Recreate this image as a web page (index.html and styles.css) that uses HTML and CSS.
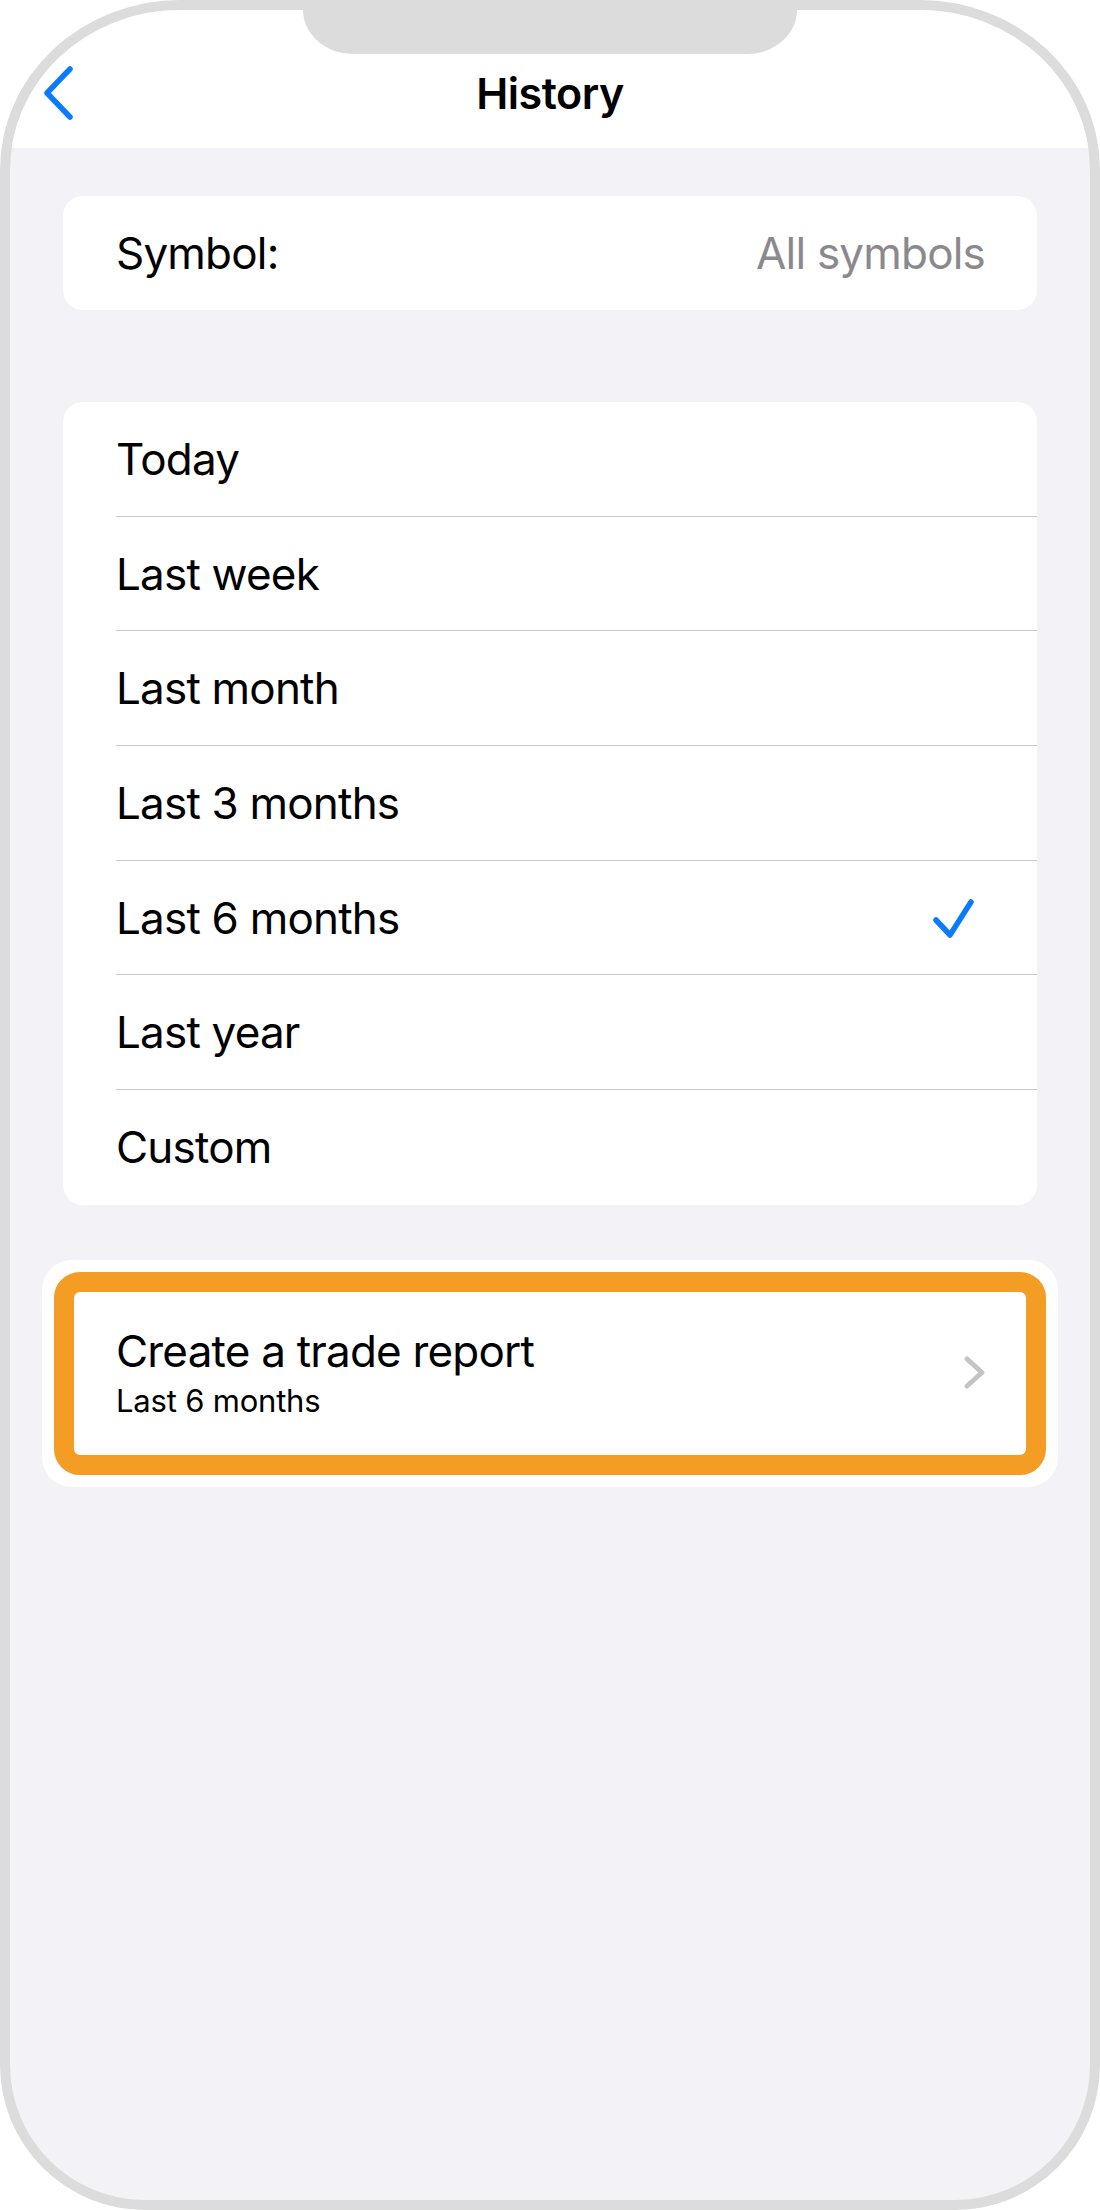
FILE: index.html
```html
<!DOCTYPE html>
<html lang="en">
<head>
<meta charset="utf-8">
<title>History</title>
<link rel="stylesheet" href="styles.css">
</head>
<body>
<div class="phone">
  <div class="notch"></div>
  <header class="navbar">
    <div class="nav-left">
      <svg class="back" width="32" height="54" viewBox="0 0 32 54"><path d="M27 3 L4 27 L27 51" fill="none" stroke="#0a7aff" stroke-width="5.5" stroke-linecap="round" stroke-linejoin="round"/></svg>
    </div>
    <div class="nav-title">History</div>
    <div class="nav-right"></div>
  </header>
  <main class="content">
    <div class="card symbol-card">
      <span class="label">Symbol:</span>
      <span class="value">All symbols</span>
    </div>
    <div class="card list-card">
      <div class="row"><div class="row-inner"><span>Today</span></div></div>
      <div class="row"><div class="row-inner"><span>Last week</span></div></div>
      <div class="row"><div class="row-inner"><span>Last month</span></div></div>
      <div class="row"><div class="row-inner"><span>Last 3 months</span></div></div>
      <div class="row"><div class="row-inner"><span>Last 6 months</span>
        <svg class="check" width="44" height="44" viewBox="0 0 44 44"><path d="M4 24 L18 39 L39 6" fill="none" stroke="#0a7aff" stroke-width="5.5" stroke-linecap="round" stroke-linejoin="round"/></svg>
      </div></div>
      <div class="row"><div class="row-inner"><span>Last year</span></div></div>
      <div class="row"><div class="row-inner"><span>Custom</span></div></div>
    </div>
    <div class="highlight">
      <div class="report">
        <div class="report-text">
          <div class="report-title">Create a trade report</div>
          <div class="report-sub">Last 6 months</div>
        </div>
        <svg class="chev" width="26" height="38" viewBox="0 0 26 38"><path d="M5 5 L20 18.5 L5 32" fill="none" stroke="#c4c4c7" stroke-width="5" stroke-linecap="round" stroke-linejoin="round"/></svg>
      </div>
    </div>
  </main>
</div>
</body>
</html>
```
FILE: styles.css
```css
html, body {
  margin: 0;
  padding: 0;
  background: #ffffff;
}
body {
  width: 1100px;
  height: 2210px;
  font-family: Inter, "Noto Sans", sans-serif;
  color: #000;
}
.phone {
  box-sizing: border-box;
  width: 1100px;
  height: 2210px;
  border: 10px solid #dcdcdc;
  border-radius: 180px 180px 145px 145px / 170px 170px 145px 145px;
  overflow: hidden;
  background: #f2f2f7;
  position: relative;
}
.notch {
  position: absolute;
  top: 0;
  left: 293px;
  width: 494px;
  height: 44px;
  background: #dcdcdc;
  border-radius: 0 0 50px 50px / 0 0 44px 44px;
}
.navbar {
  height: 110px;
  padding-top: 28px;
  background: #ffffff;
  display: grid;
  grid-template-columns: 1fr auto 1fr;
  align-items: center;
}
.nav-left {
  display: flex;
  align-items: center;
  padding-left: 33px;
}
.back {
  display: block;
}
.nav-title {
  font-size: 43px;
  font-weight: 600;
  letter-spacing: -0.5px;
  line-height: 54px;
}
.content {
  padding: 48px 53px 0;
  font-size: 44px;
  letter-spacing: -0.8px;
}
.card {
  background: #ffffff;
  border-radius: 20px;
}
.symbol-card {
  height: 114px;
  display: flex;
  align-items: center;
  justify-content: space-between;
  padding: 0 52px 0 53px;
}
.symbol-card .value {
  color: #8a8a8e;
}
.list-card {
  margin-top: 92px;
  overflow: hidden;
}
.row {
  height: 114.7px;
  display: flex;
  padding-left: 53px;
}
.row-inner {
  flex: 1;
  display: flex;
  align-items: center;
  justify-content: space-between;
  padding-right: 61px;
  border-bottom: 1.5px solid #c8c8cc;
}
.row:last-child .row-inner {
  border-bottom: none;
}
.check {
  display: block;
}
.highlight {
  margin: 55px -21px 0;
  background: #ffffff;
  border-radius: 30px;
  padding: 12px;
}
.report {
  height: 163px;
  border: 20px solid #f49d25;
  border-radius: 26px;
  background: #ffffff;
  display: flex;
  align-items: center;
  justify-content: space-between;
  padding: 0 38px 0 42px;
}
.report-title {
  line-height: 52px;
}
.report-sub {
  margin-top: 4px;
  font-size: 31px;
  line-height: 40px;
  letter-spacing: -0.2px;
}
.chev {
  display: block;
}
```
